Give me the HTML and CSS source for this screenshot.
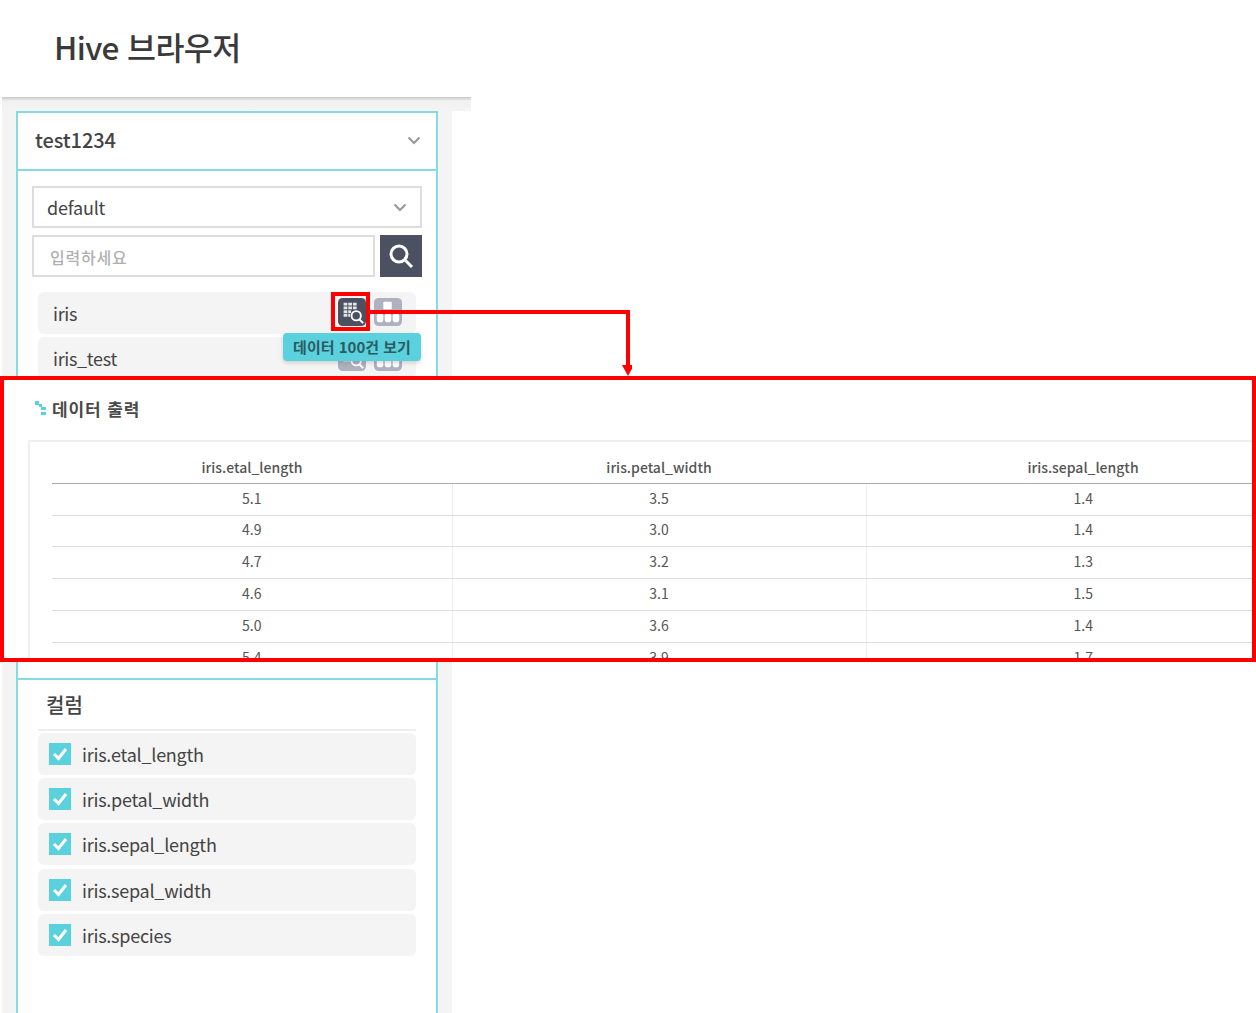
FILE: index.html
```html
<!DOCTYPE html>
<html lang="ko">
<head>
    <meta charset="UTF-8">
    <meta name="viewport" content="width=device-width, initial-scale=1.0">
    <title>Hive 브라우저</title>
    <link rel="stylesheet" href="styles.css">
</head>
<body>
    <div class="page">
        <!-- Title -->
        <header class="page-head">
            <h1>Hive 브라우저</h1>
        </header>

        <div class="shot">
            <aside class="panel">
                <div class="panel-head">
                    <span>test1234</span>
                    <svg class="chevron" viewBox="0 0 14 9"><path d="M1.500 1.500 7 7l5.500-5.500"/></svg>
                </div>

                <div class="panel-body">
                    <div class="select-box">
                        <span>default</span>
                        <svg class="chevron" viewBox="0 0 14 9"><path d="M1.500 1.500 7 7l5.500-5.500"/></svg>
                    </div>

                    <div class="search-row">
                        <div class="search-input">입력하세요</div>
                        <button class="search-btn" type="button">
                            <svg viewBox="0 0 26 26"><circle cx="11" cy="11" r="8"/><path d="M17 17l7 7"/></svg>
                        </button>
                    </div>

                    <ul class="table-list">
                        <li class="table-row">
                            <span>iris</span>
                            <div class="row-icons">
                                <svg class="tool-icon dark" viewBox="0 0 30 30">
                                    <rect width="30" height="30" rx="5"/>
                                    <path class="grid-cells" d="M6 5h4v3H6zM11 5h4v3h-4zM16 5h4v3h-4zM6 9h4v3H6zM11 9h4v3h-4zM16 9h4v3h-4zM6 13h4v3H6zM11 13h3v3h-3zM6 17h4v3H6zM11 17h2v3h-2z"/>
                                    <circle class="lens" cx="19.500" cy="19" r="5"/>
                                    <path class="lens" d="M23 23l4 4"/>
                                </svg>
                                <svg class="tool-icon grey" viewBox="0 0 30 30">
                                    <rect width="30" height="30" rx="5"/>
                                    <rect class="tree-cells" x="10" y="4" width="9" height="8" rx="1"/>
                                    <rect class="tree-cells" x="3" y="16.500" width="7" height="9.500" rx="3"/>
                                    <rect class="tree-cells" x="11.500" y="16.500" width="7" height="9.500" rx="3"/>
                                    <rect class="tree-cells" x="20" y="16.500" width="7" height="9.500" rx="3"/>
                                </svg>
                            </div>
                        </li>
                        <li class="table-row">
                            <span>iris_test</span>
                            <div class="row-icons">
                                <svg class="tool-icon grey" viewBox="0 0 30 30">
                                    <rect width="30" height="30" rx="5"/>
                                    <path class="grid-cells" d="M6 5h4v3H6zM11 5h4v3h-4zM16 5h4v3h-4zM6 9h4v3H6zM11 9h4v3h-4zM16 9h4v3h-4zM6 13h4v3H6zM11 13h3v3h-3zM6 17h4v3H6zM11 17h2v3h-2z"/>
                                    <circle class="lens" cx="19.500" cy="19" r="5"/>
                                    <path class="lens" d="M23 23l4 4"/>
                                </svg>
                                <svg class="tool-icon grey" viewBox="0 0 30 30">
                                    <rect width="30" height="30" rx="5"/>
                                    <rect class="tree-cells" x="10" y="4" width="9" height="8" rx="1"/>
                                    <rect class="tree-cells" x="3" y="16.500" width="7" height="9.500" rx="3"/>
                                    <rect class="tree-cells" x="11.500" y="16.500" width="7" height="9.500" rx="3"/>
                                    <rect class="tree-cells" x="20" y="16.500" width="7" height="9.500" rx="3"/>
                                </svg>
                            </div>
                        </li>
                    </ul>
                </div>

                <!-- Columns -->
                <section class="columns">
                    <h3>컬럼</h3>
                    <ul class="column-list">
                        <li class="column-row"><svg class="check" viewBox="0 0 22 22"><rect width="22" height="22"/><path d="M5 11l4.500 4.500L17 6"/></svg>iris.etal_length</li>
                        <li class="column-row"><svg class="check" viewBox="0 0 22 22"><rect width="22" height="22"/><path d="M5 11l4.500 4.500L17 6"/></svg>iris.petal_width</li>
                        <li class="column-row"><svg class="check" viewBox="0 0 22 22"><rect width="22" height="22"/><path d="M5 11l4.500 4.500L17 6"/></svg>iris.sepal_length</li>
                        <li class="column-row"><svg class="check" viewBox="0 0 22 22"><rect width="22" height="22"/><path d="M5 11l4.500 4.500L17 6"/></svg>iris.sepal_width</li>
                        <li class="column-row"><svg class="check" viewBox="0 0 22 22"><rect width="22" height="22"/><path d="M5 11l4.500 4.500L17 6"/></svg>iris.species</li>
                    </ul>
                </section>
            </aside>
        </div>

        <!-- Tooltip over the list -->
        <div class="tooltip">데이터 100건 보기</div>

        <!-- Red callout: box, arrow -->
        <div class="callout-mark"></div>
        <svg class="callout-arrow" viewBox="0 0 262 68">
            <path class="arrow-line" d="M0 2h258v55"/>
            <path class="arrow-head" d="M252 55h12l-6 11z"/>
        </svg>

        <!-- Data output overlay -->
        <div class="output">
            <div class="output-title">
                <svg class="bullet" viewBox="0 0 11 14"><path d="M0 0h4v4H0zM4 3h3v3H4zM6 6h5v3H6zM6 11h5v3H6z"/></svg>
                데이터 출력
            </div>
            <div class="output-box">
                <table class="data-table">
                    <thead>
                        <tr><th>iris.etal_length</th><th>iris.petal_width</th><th>iris.sepal_length</th></tr>
                    </thead>
                    <tbody>
                        <tr><td>5.1</td><td>3.5</td><td>1.4</td></tr>
                        <tr><td>4.9</td><td>3.0</td><td>1.4</td></tr>
                        <tr><td>4.7</td><td>3.2</td><td>1.3</td></tr>
                        <tr><td>4.6</td><td>3.1</td><td>1.5</td></tr>
                        <tr><td>5.0</td><td>3.6</td><td>1.4</td></tr>
                        <tr><td>5.4</td><td>3.9</td><td>1.7</td></tr>
                    </tbody>
                </table>
            </div>
        </div>
    </div>
</body>
</html>
```

FILE: styles.css
```css
/* General Styles */
* {
    margin: 0;
    padding: 0;
    box-sizing: border-box;
}

body {
    font-family: 'Noto Sans CJK KR', 'Noto Sans', sans-serif;
    background: #fff;
    color: #444;
}

ul {
    list-style: none;
}

.page {
    position: relative;
    width: 1256px;
    height: 1013px;
    overflow: hidden;
}

.page-head {
    height: 97px;
    padding: 22px 0 0 54px;
}

.page-head h1 {
    font-size: 31.500px;
    font-weight: 500;
    line-height: 48px;
    letter-spacing: -0.6px;
    color: #3a3a3a;
}

/* Grey backdrop behind the panel */
.shot {
    width: 469px;
    height: 916px;
    margin-left: 2px;
    padding: 14px 0 0 14px;
    background: linear-gradient(#c9c9c9, #f1f1f1 4px, #f4f4f4 14px, #f4f4f4);
    position: relative;
}

.shot::after {
    content: "";
    position: absolute;
    left: 450px;
    top: 14px;
    width: 19px;
    bottom: 0;
    background: #fff;
}

.panel {
    width: 422px;
    height: 902px;
    background: #fff;
    border: 2px solid #84dbe2;
    border-bottom: none;
}

.panel-head {
    display: flex;
    align-items: center;
    justify-content: space-between;
    height: 58px;
    padding: 0 15px 3px 17px;
    border-bottom: 2px solid #84dbe2;
    font-size: 20px;
    font-weight: 500;
    letter-spacing: -0.1px;
}

.panel-head .chevron {
    margin-top: 2px;
}

.chevron {
    width: 14px;
    height: 9px;
    fill: none;
    stroke: #9a9a9a;
    stroke-width: 2.2;
}

.panel-body {
    height: 509px;
    padding: 15px 14px 0;
    border-bottom: 2px solid #84dbe2;
}

.select-box {
    display: flex;
    align-items: center;
    justify-content: space-between;
    height: 42px;
    padding: 0 13px;
    border: 2px solid #ddd;
    font-size: 18px;
    letter-spacing: -0.2px;
}

.search-row {
    display: flex;
    gap: 5px;
    margin-top: 7px;
}

.search-input {
    flex: 1;
    height: 42px;
    padding: 0 16px;
    border: 2px solid #ddd;
    font-size: 16px;
    font-weight: 500;
    line-height: 40px;
    letter-spacing: 0.8px;
    color: #b0b0b0;
}

.search-btn {
    width: 42px;
    height: 42px;
    border: none;
    background: #4c5161;
    display: flex;
    align-items: center;
    justify-content: center;
}

.search-btn svg {
    width: 26px;
    height: 26px;
    fill: none;
    stroke: #fff;
    stroke-width: 3;
}

.table-list {
    margin: 15px 6px 0;
}

.table-row {
    display: flex;
    align-items: center;
    justify-content: space-between;
    height: 42px;
    margin-bottom: 3px;
    padding: 0 14px 0 15px;
    border-radius: 6px;
    background: #f4f4f4;
    font-size: 18px;
    letter-spacing: -0.3px;
}

.row-icons {
    display: flex;
    gap: 8px;
    margin-top: -2px;
}

.tool-icon {
    width: 28px;
    height: 28px;
}

.tool-icon.dark > rect {
    fill: #4c5161;
}

.tool-icon.grey > rect {
    fill: #aeb2c0;
}

.grid-cells {
    fill: #e4e4e8;
}

.tool-icon.grey > rect.tree-cells {
    fill: #fff;
}

.lens {
    fill: #4c5161;
    stroke: #fff;
    stroke-width: 2;
}

.tool-icon.grey .lens {
    fill: #aeb2c0;
}

.columns {
    padding: 0 20px;
}

.columns h3 {
    height: 51px;
    padding: 10px 8px 0;
    margin-bottom: 2px;
    border-bottom: 2px solid #eee;
    font-size: 20px;
    font-weight: 500;
    line-height: 30px;
}

.column-row {
    display: flex;
    align-items: center;
    gap: 11px;
    height: 42px;
    margin-bottom: 3.200px;
    padding-left: 11px;
    border-radius: 6px;
    background: #f4f4f4;
    font-size: 18px;
    letter-spacing: -0.25px;
}

.check {
    width: 22px;
    height: 22px;
}

.check rect {
    fill: #5ad1dc;
}

.check path {
    fill: none;
    stroke: #fff;
    stroke-width: 3;
}

.tooltip {
    position: absolute;
    left: 283px;
    top: 333px;
    width: 138px;
    height: 28px;
    border-radius: 4px;
    background: #5ad1dc;
    box-shadow: 0 2px 4px rgba(0, 0, 0, 0.15);
    font-size: 15px;
    font-weight: 700;
    line-height: 28px;
    text-align: center;
    letter-spacing: 0;
    color: #2b5b63;
}

.callout-mark {
    position: absolute;
    left: 331px;
    top: 292px;
    width: 39px;
    height: 39px;
    border: 4px solid #f00;
}

.callout-arrow {
    position: absolute;
    left: 370px;
    top: 310px;
    width: 262px;
    height: 68px;
}

.arrow-line {
    fill: none;
    stroke: #f00;
    stroke-width: 4;
}

.arrow-head {
    fill: #f00;
}

.output {
    position: absolute;
    left: 0;
    top: 376px;
    width: 1256px;
    height: 286px;
    border: 4px solid #f00;
    background: #fff;
    overflow: hidden;
}

.output-title {
    display: flex;
    align-items: center;
    gap: 6px;
    height: 60px;
    padding: 0 0 4px 31px;
    font-size: 17px;
    font-weight: 700;
    letter-spacing: 0.9px;
    color: #4a4a4a;
}

.bullet {
    width: 11px;
    height: 14px;
    fill: #5ad1dc;
}

.output-box {
    height: 240px;
    margin-left: 24px;
    padding-left: 22px;
    border-top: 2px solid #f0f0f0;
    border-left: 2px solid #f0f0f0;
}

.data-table {
    width: 1248px;
    table-layout: fixed;
    border-collapse: collapse;
    font-size: 14px;
    color: #555;
}

.data-table th:nth-child(1) {
    width: 400px;
}

.data-table th:nth-child(2) {
    width: 414px;
}

.data-table th {
    height: 41.300px;
    padding-top: 10px;
    font-weight: 500;
    border-bottom: 1.500px solid #aaa;
}

.data-table td {
    height: 31.800px;
    padding-bottom: 3px;
    text-align: center;
    border-bottom: 1.500px solid #ddd;
}

.data-table td + td {
    border-left: 1.500px solid #eee;
}
```
